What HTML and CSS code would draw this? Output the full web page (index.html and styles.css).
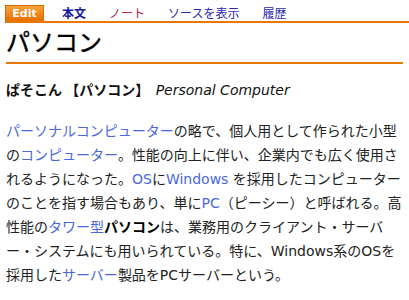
FILE: index.html
```html
<!DOCTYPE html>
<html lang="ja">
<head>
<meta charset="utf-8">
<link rel="stylesheet" href="styles.css">
</head>
<body>
<nav class="tabs">
  <span class="edit">Edit</span>
  <a class="tab current" href="#">本文</a>
  <a class="tab note" href="#">ノート</a>
  <a class="tab" href="#">ソースを表示</a>
  <a class="tab" href="#">履歴</a>
</nav>
<h1 class="title">パソコン</h1>
<p class="reading"><b>ぱそこん 【パソコン】</b> <i class="en">Personal Computer</i></p>
<p class="body"><a href="#">パーソナルコンピューター</a>の略で、個人用として作られた小型の<a href="#">コンピューター</a>。性能の向上に伴い、企業内でも広く使用されるようになった。<a href="#">OS</a>に<a href="#">Windows</a> を採用したコンピューターのことを指す場合もあり、単に<a href="#">PC</a>（ピーシー）と呼ばれる。高性能の<a href="#">タワー型</a><b>パソコン</b>は、業務用のクライアント・サーバー・システムにも用いられている。特に、Windows系のOSを採用した<a href="#">サーバー</a>製品をPCサーバーという。</p>
</body>
</html>
```
FILE: styles.css
```css
html, body { margin: 0; padding: 0; background: #fff; }
body {
  padding: 5px 6px 0 5px;
  font-family: "DejaVu Sans", "Noto Sans CJK JP", sans-serif;
  color: #111;
}
.tabs {
  display: flex;
  align-items: flex-end;
  height: 16px;
  border-bottom: 2px solid #e87800;
  margin-right: -6px;
  font-size: 12px;
}
.edit {
  width: 39px;
  height: 16px;
  box-sizing: border-box;
  background: linear-gradient(#f7a23a, #e87000);
  border: 1px solid #d86a00;
  border-bottom: none;
  color: #fff;
  font-weight: bold;
  font-family: "DejaVu Sans", sans-serif;
  font-size: 11px;
  line-height: 16px;
  text-align: center;
}
.tab {
  color: #2a2ab0;
  text-decoration: none;
  line-height: 16px;
  margin-left: 23px;
  font-family: "Noto Sans CJK JP", sans-serif;
}
.tab:first-of-type { margin-left: 18px; }
.tab.current { font-weight: bold; color: #1a1aa0; }
.tab.note { color: #c0203a; }
.title {
  margin: 4px 0 0 1px;
  font-size: 24px;
  font-weight: normal;
  font-family: "Noto Sans CJK JP", sans-serif;
  line-height: 28px;
  padding-bottom: 7px;
  border-bottom: 2px solid #e87800;
  -webkit-text-stroke: 0.4px #000;
  color: #000;
}
.reading {
  margin: 15px 0 0 1px;
  font-size: 14px;
  line-height: 20px;
}
.reading b { font-family: "Noto Sans CJK JP", sans-serif; }
.en { font-family: "DejaVu Sans", sans-serif; margin-left: 2px; }
.body {
  margin: 19px 0 0 1px;
  font-size: 14px;
  line-height: 24px;
  color: #222;
}
.body a { color: #4a68e0; text-decoration: none; }
.body b { color: #000; }
```
